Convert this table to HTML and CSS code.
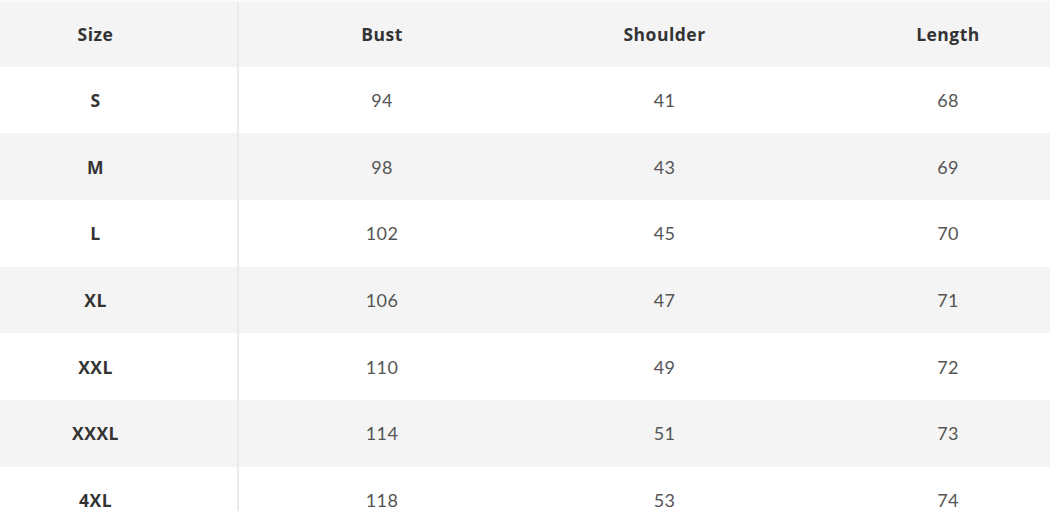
FILE: index.html
```html
<!DOCTYPE html>
<html>
<head>
<meta charset="utf-8">
<link rel="stylesheet" href="styles.css">
</head>
<body>
<div class="table">
  <div class="row head">
    <div class="cell size">Size</div><div class="cell bust">Bust</div><div class="cell">Shoulder</div><div class="cell len">Length</div>
  </div>
  <div class="row">
    <div class="cell size">S</div><div class="cell bust">94</div><div class="cell">41</div><div class="cell len">68</div>
  </div>
  <div class="row alt">
    <div class="cell size">M</div><div class="cell bust">98</div><div class="cell">43</div><div class="cell len">69</div>
  </div>
  <div class="row">
    <div class="cell size">L</div><div class="cell bust">102</div><div class="cell">45</div><div class="cell len">70</div>
  </div>
  <div class="row alt">
    <div class="cell size">XL</div><div class="cell bust">106</div><div class="cell">47</div><div class="cell len">71</div>
  </div>
  <div class="row">
    <div class="cell size">XXL</div><div class="cell bust">110</div><div class="cell">49</div><div class="cell len">72</div>
  </div>
  <div class="row alt">
    <div class="cell size">XXXL</div><div class="cell bust">114</div><div class="cell">51</div><div class="cell len">73</div>
  </div>
  <div class="row">
    <div class="cell size">4XL</div><div class="cell bust">118</div><div class="cell">53</div><div class="cell len">74</div>
  </div>
</div>
</body>
</html>
```
FILE: styles.css
```css
html, body {
  margin: 0;
  padding: 0;
  background: #ffffff;
  overflow: hidden;
}
body {
  width: 1050px;
  height: 511px;
  font-family: Lato, "Noto Sans", sans-serif;
}
.table {
  display: flex;
  flex-direction: column;
}
.row {
  display: grid;
  grid-template-columns: 239px 284px 283px 244px;
  height: 66.7px;
  background: #ffffff;
}
.row.head,
.row.alt {
  background: #f4f4f4;
}
.row.head {
  border-top: 2px solid #fafafa;
  box-sizing: border-box;
}
.cell {
  display: flex;
  align-items: center;
  justify-content: center;
  font-size: 18px;
  letter-spacing: 0.4px;
  color: #555555;
  font-weight: 400;
}
.cell.size {
  padding-right: 46px;
  border-right: 2px solid #ebebeb;
}
.cell.bust {
  padding-left: 2px;
}
.cell.len {
  padding-left: 40px;
}
.head .cell,
.cell.size {
  font-family: "Open Sans", Lato, sans-serif;
  font-weight: 700;
  color: #333333;
  font-size: 17.5px;
  letter-spacing: 0.5px;
}
```
